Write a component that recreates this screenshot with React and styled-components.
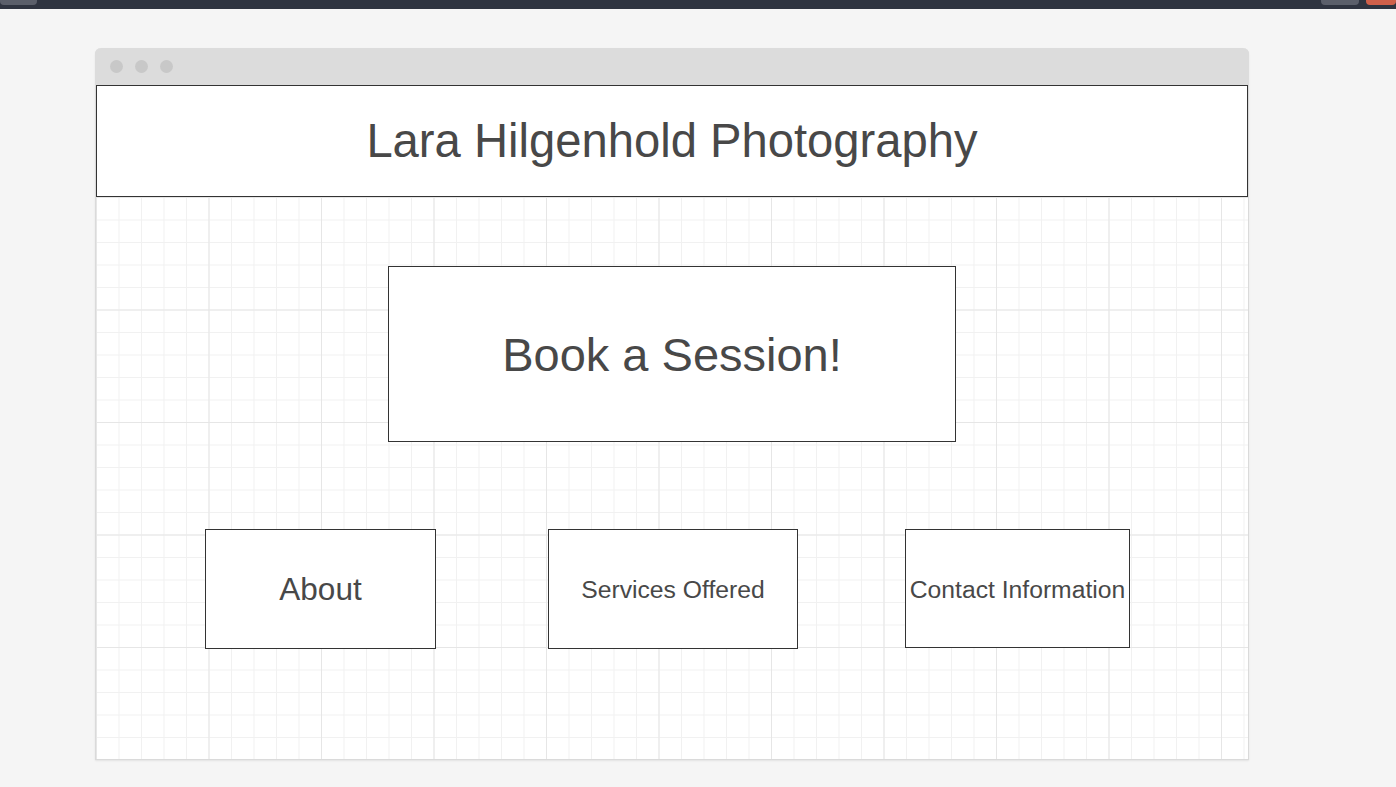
import React from "react";
import styled, { createGlobalStyle } from "styled-components";

const Global = createGlobalStyle`
  html, body { margin: 0; padding: 0; }
  body {
    background: #f5f5f5;
    font-family: "Liberation Sans", Arial, sans-serif;
    width: 1396px;
    height: 787px;
    overflow: hidden;
  }
`;

const TopBar = styled.div`
  height: 9px;
  background: #2f3440;
  display: flex;
  align-items: flex-start;
`;

const BarTab = styled.div`
  height: 5px;
  width: ${(p) => p.$w}px;
  margin-left: ${(p) => p.$ml || 0}px;
  background: ${(p) => p.$color};
  border-radius: 0 0 4px 4px;
`;

const Window = styled.div`
  margin: 39px 0 0 95px;
  width: 1152px;
  border: 1px solid #dadada;
  border-top: none;
  border-radius: 6px 6px 0 0;
  box-shadow: 0 1px 2px rgba(0, 0, 0, 0.08);
`;

const TitleBar = styled.div`
  height: 37px;
  margin: 0 -1px;
  background: #dcdcdc;
  border-radius: 6px 6px 0 0;
  display: flex;
  align-items: center;
  gap: 12px;
  padding-left: 15px;
  box-sizing: border-box;
`;

const Dot = styled.span`
  width: 13px;
  height: 13px;
  border-radius: 50%;
  background: #c8c8c8;
`;

const Header = styled.div`
  height: 112px;
  box-sizing: border-box;
  border: 1px solid #333;
  background: #fff;
  display: flex;
  align-items: center;
  justify-content: center;
`;

const Title = styled.h1`
  margin: 0;
  font-weight: 400;
  font-size: 47.2px;
  color: #484848;
  line-height: 1;
`;

const Canvas = styled.div`
  height: 562px;
  box-sizing: border-box;
  background-color: #fff;
  background-image:
    linear-gradient(to right, #e6e6e6 1px, transparent 1px),
    linear-gradient(to bottom, #e6e6e6 1px, transparent 1px),
    linear-gradient(to right, #f1f1f1 1px, transparent 1px),
    linear-gradient(to bottom, #f1f1f1 1px, transparent 1px);
  background-size: 112.5px 112.5px, 112.5px 112.5px, 22.5px 22.5px, 22.5px 22.5px;
  background-position: 0 0;
  padding-top: 69px;
  display: flex;
  flex-direction: column;
  align-items: stretch;
`;

const Node = styled.div`
  box-sizing: border-box;
  width: ${(p) => p.$w}px;
  height: ${(p) => p.$h}px;
  margin-left: ${(p) => p.$ml || 0}px;
  padding-top: ${(p) => p.$pt || 0}px;
  border: 1px solid #333;
  background: #fff;
  display: flex;
  align-items: center;
  justify-content: center;
  color: #484848;
  font-size: ${(p) => p.$fs}px;
  white-space: nowrap;
  flex-shrink: 0;
`;

const BookRow = styled.div`
  display: flex;
  justify-content: center;
`;

const NavRow = styled.div`
  display: flex;
  margin-top: 87px;
  padding-left: 109px;
`;

export default function App() {
  return (
    <>
      <Global />
      <TopBar>
        <BarTab $w={37} $color="#5b5f6a" />
        <BarTab $w={38} $ml={1284} $color="#5b5f6a" />
        <BarTab $w={30} $ml={7} $color="#d0604a" />
      </TopBar>
      <Window>
        <TitleBar>
          <Dot />
          <Dot />
          <Dot />
        </TitleBar>
        <Header>
          <Title>Lara Hilgenhold Photography</Title>
        </Header>
        <Canvas>
          <BookRow>
            <Node $w={568} $h={176} $fs={47}>Book a Session!</Node>
          </BookRow>
          <NavRow>
            <Node $w={231} $h={120} $fs={31.5}>About</Node>
            <Node $w={250} $h={120} $fs={24.7} $ml={112} $pt={2}>Services Offered</Node>
            <Node $w={225} $h={119} $fs={24.7} $ml={107} $pt={2}>Contact Information</Node>
          </NavRow>
        </Canvas>
      </Window>
    </>
  );
}
